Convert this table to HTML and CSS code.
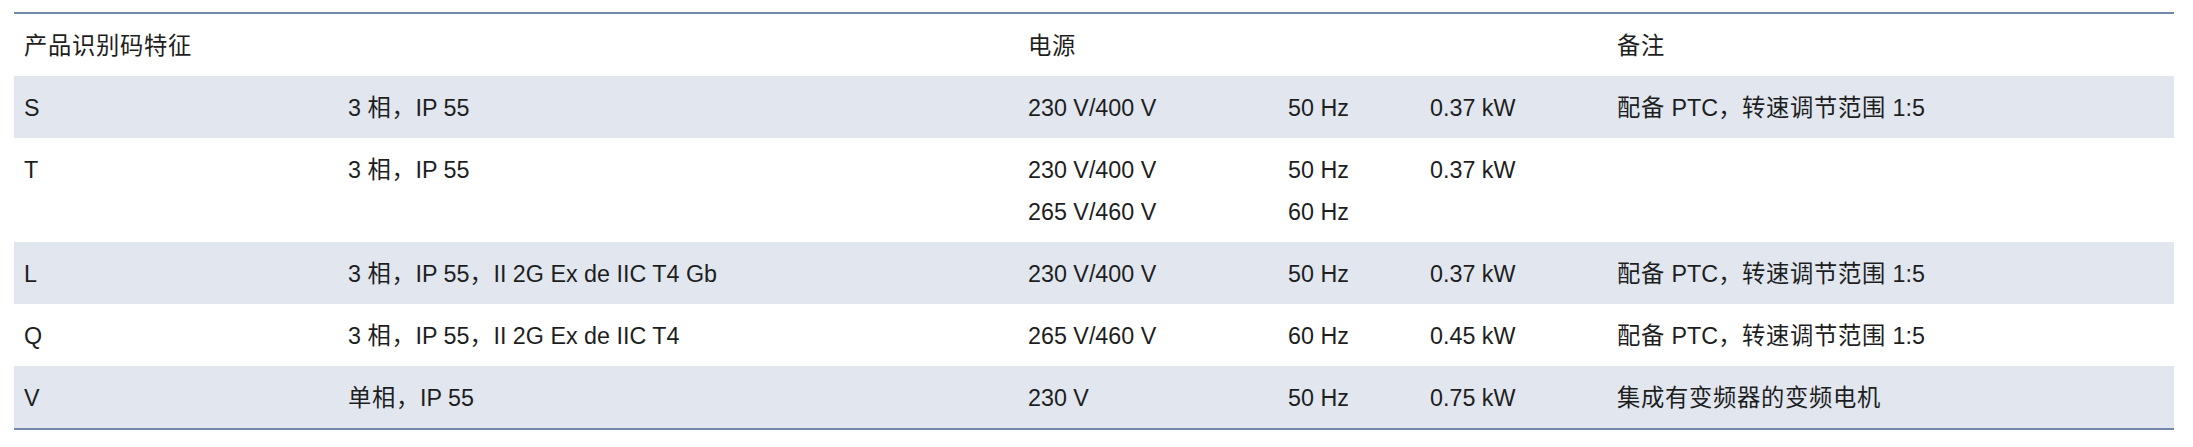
FILE: index.html
```html
<!DOCTYPE html>
<html lang="zh-CN">
<head>
<meta charset="utf-8">
<title>产品识别码特征</title>
<link rel="stylesheet" href="styles.css">
</head>
<body>
<table class="spec">
  <colgroup>
    <col class="c1"><col class="c2"><col class="c3"><col class="c4"><col class="c5"><col class="c6">
  </colgroup>
  <thead>
    <tr>
      <th colspan="2"><span class="cjk">产品识别码特征</span></th>
      <th colspan="3"><span class="cjk">电源</span></th>
      <th><span class="cjk">备注</span></th>
    </tr>
  </thead>
  <tbody>
    <tr class="alt">
      <td>S</td><td>3 <span class="cjk">相，</span>IP 55</td><td>230 V/400 V</td><td>50 Hz</td><td>0.37 kW</td><td><span class="cjk">配备</span> PTC<span class="cjk">，转速调节范围</span> 1:5</td>
    </tr>
    <tr>
      <td>T</td><td>3 <span class="cjk">相，</span>IP 55</td><td>230 V/400 V<br>265 V/460 V</td><td>50 Hz<br>60 Hz</td><td>0.37 kW</td><td></td>
    </tr>
    <tr class="alt">
      <td>L</td><td>3 <span class="cjk">相，</span>IP 55<span class="cjk">，</span>II 2G Ex de IIC T4 Gb</td><td>230 V/400 V</td><td>50 Hz</td><td>0.37 kW</td><td><span class="cjk">配备</span> PTC<span class="cjk">，转速调节范围</span> 1:5</td>
    </tr>
    <tr>
      <td>Q</td><td>3 <span class="cjk">相，</span>IP 55<span class="cjk">，</span>II 2G Ex de IIC T4</td><td>265 V/460 V</td><td>60 Hz</td><td>0.45 kW</td><td><span class="cjk">配备</span> PTC<span class="cjk">，转速调节范围</span> 1:5</td>
    </tr>
    <tr class="alt">
      <td>V</td><td><span class="cjk">单相，</span>IP 55</td><td>230 V</td><td>50 Hz</td><td>0.75 kW</td><td><span class="cjk">集成有变频器的变频电机</span></td>
    </tr>
  </tbody>
</table>
</body>
</html>
```

FILE: styles.css
```css
html, body {
  margin: 0;
  padding: 0;
  background: #ffffff;
}

body {
  padding: 12px 0 0 14px;
  font-family: "Liberation Sans", "Noto Sans CJK SC", sans-serif;
  color: #1e1e1e;
}

.spec {
  width: 2160px;
  border-collapse: collapse;
  table-layout: fixed;
  border-top: 2px solid #7189aa;
  border-bottom: 2px solid #7189aa;
  font-size: 23.3px;
}

.c1 { width: 324px; }
.c2 { width: 680px; }
.c3 { width: 260px; }
.c4 { width: 142px; }
.c5 { width: 187px; }
.c6 { width: 567px; }

.spec th,
.spec td {
  padding: 11px 10px 9px;
  line-height: 42px;
  text-align: left;
  vertical-align: top;
  font-weight: normal;
  white-space: nowrap;
}

.cjk {
  letter-spacing: 0.7px;
}

.spec tr.alt td {
  background: #e1e6ef;
}
```
